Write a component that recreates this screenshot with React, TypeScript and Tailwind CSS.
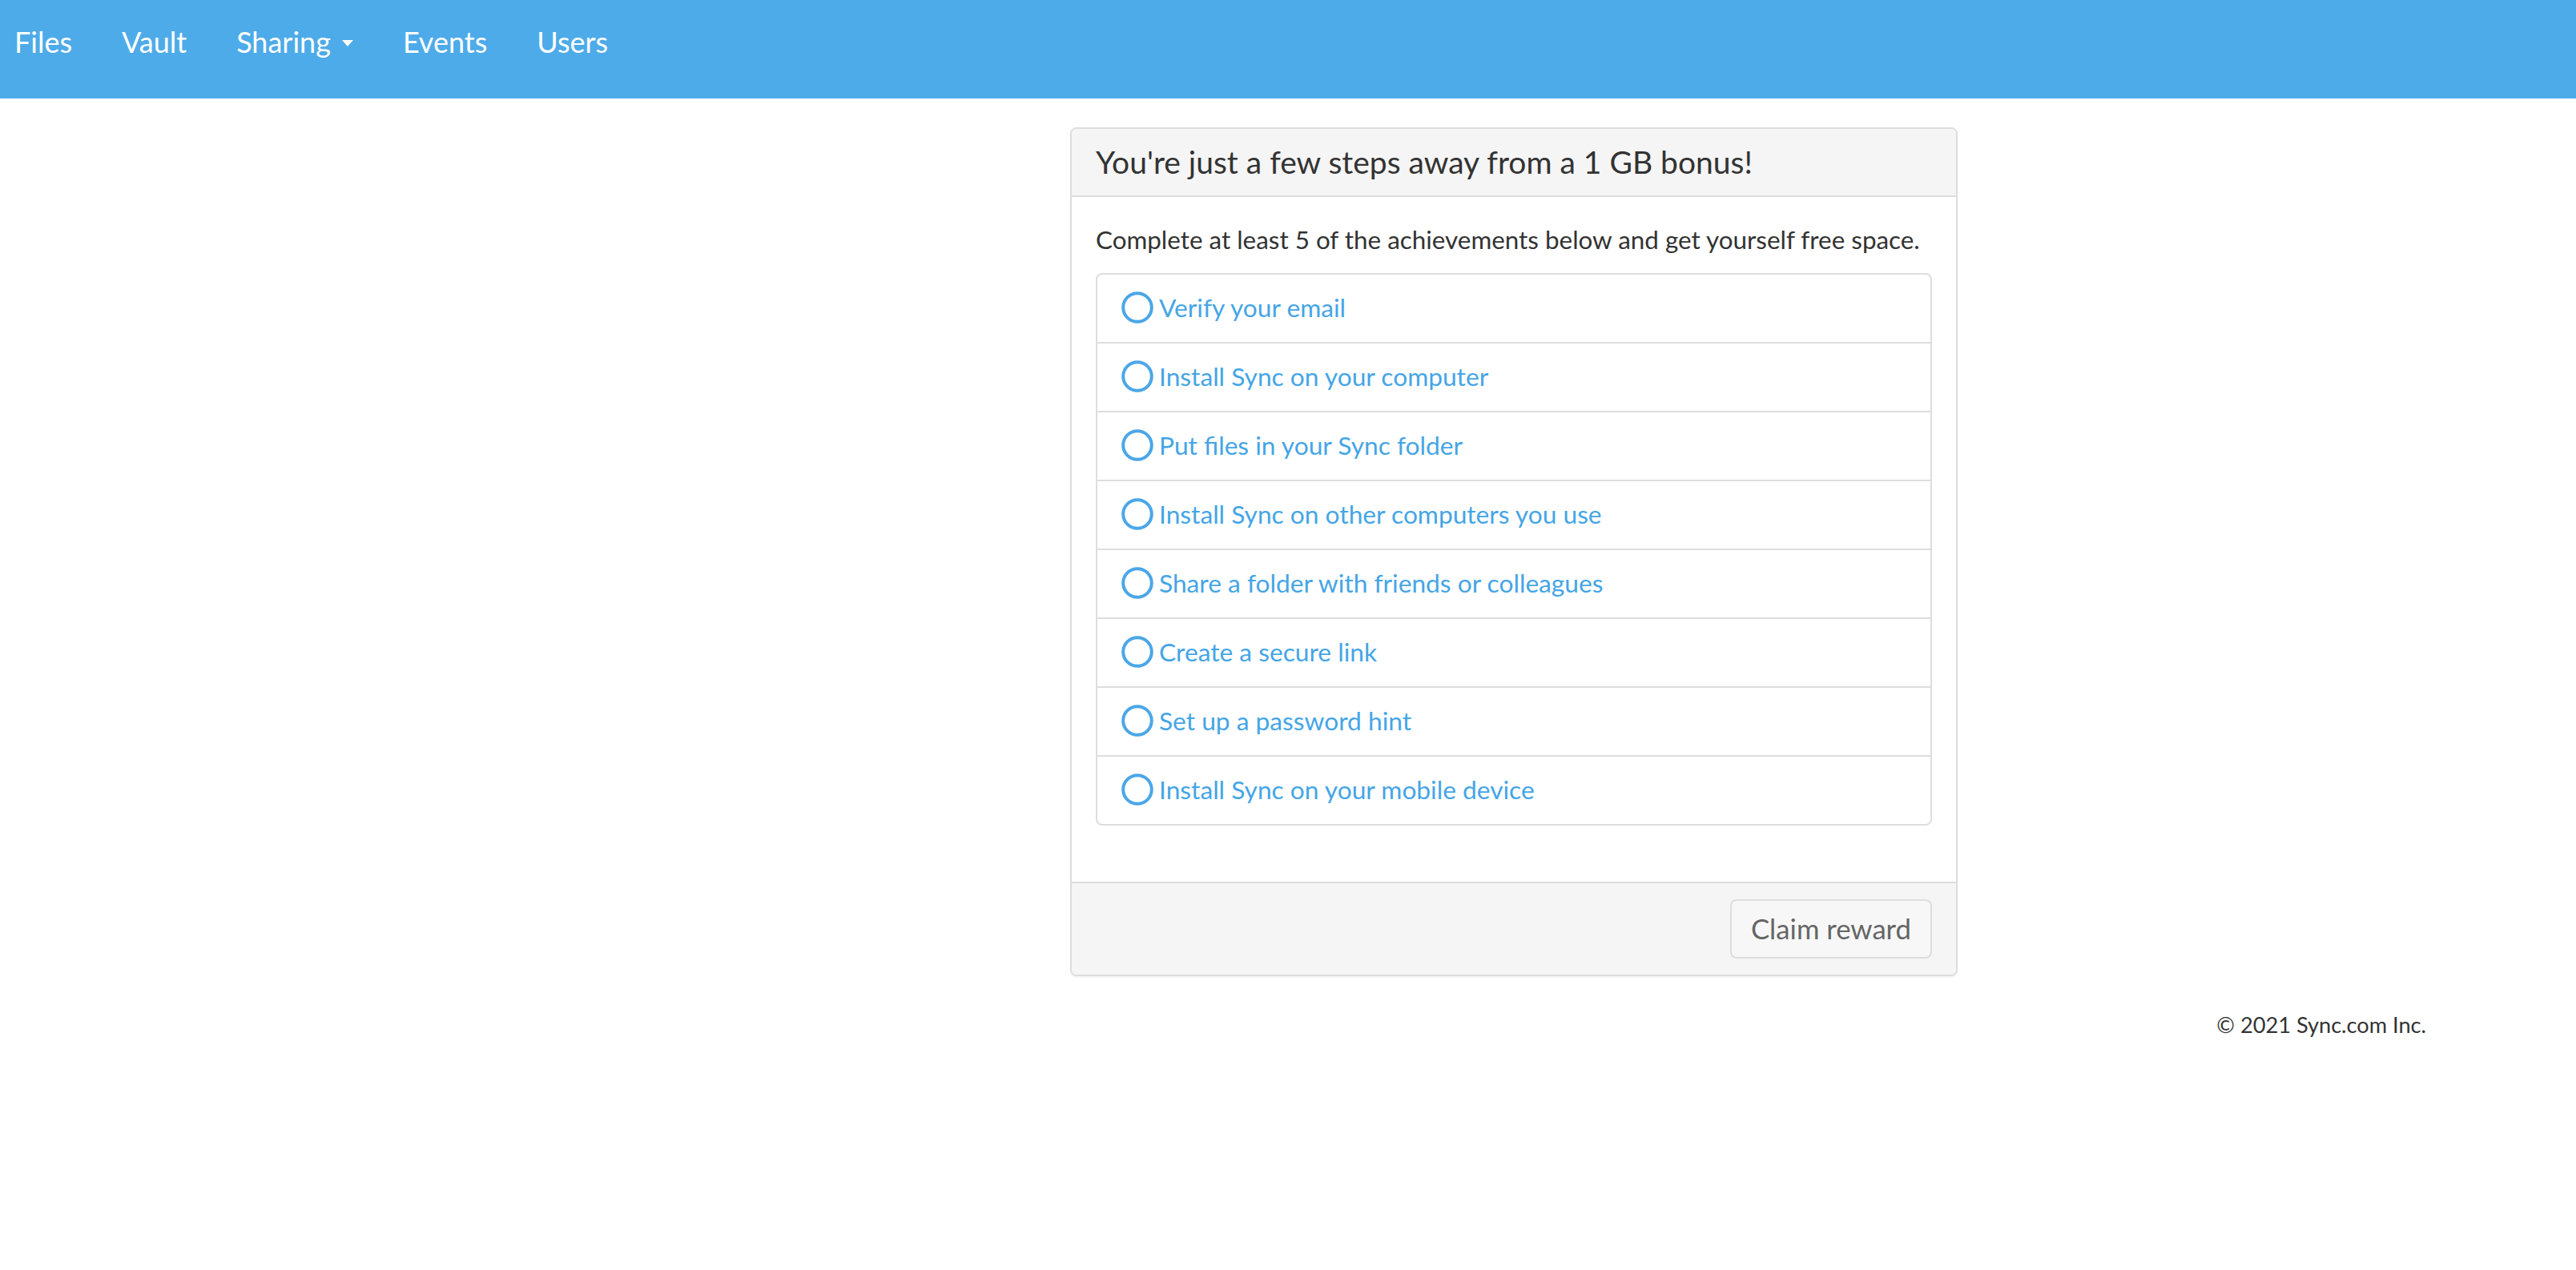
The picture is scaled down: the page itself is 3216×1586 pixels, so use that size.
import React from 'react';

const achievements = [
  'Verify your email',
  'Install Sync on your computer',
  'Put files in your Sync folder',
  'Install Sync on other computers you use',
  'Share a folder with friends or colleagues',
  'Create a secure link',
  'Set up a password hint',
  'Install Sync on your mobile device',
];

function NavBar() {
  return (
    <nav className="h-[123px] bg-[#4eabe9]">
      <ul className="flex gap-[62px] pl-[18px] pt-[32px] text-[36px] leading-[40px] text-white">
        <li>Files</li>
        <li>Vault</li>
        <li className="flex items-center">
          Sharing
          <span className="ml-[14px] mt-[4px] h-0 w-0 border-x-[7px] border-t-[8px] border-x-transparent border-t-white" />
        </li>
        <li>Events</li>
        <li>Users</li>
      </ul>
    </nav>
  );
}

function CircleIcon() {
  return (
    <svg width="40" height="40" viewBox="0 0 40 40" className="shrink-0">
      <circle cx="20" cy="20" r="17.8" fill="none" stroke="#4aa7e8" strokeWidth="4" />
    </svg>
  );
}

function AchievementPanel() {
  return (
    <div className="ml-[1336px] mt-[36px] w-[1108px] rounded-[8px] border-2 border-[#dddddd] bg-white shadow-[0_2px_2px_rgba(0,0,0,0.05)]">
      <div className="rounded-t-[6px] border-b-2 border-[#dddddd] bg-[#f5f5f5] px-[30px] py-[20px]">
        <h3 className="text-[39px] leading-[43px] text-[#333333]">
          You're just a few steps away from a 1 GB bonus!
        </h3>
      </div>

      <div className="px-[30px] pt-[32px] pb-[70px]">
        <p className="mb-[20px] text-[31.4px] leading-[43px] text-[#333333]">
          Complete at least 5 of the achievements below and get yourself free space.
        </p>
        <ul>
          {achievements.map((label, i) => (
            <li
              key={label}
              className={`flex items-center gap-[7px] border-2 border-[#dddddd] px-[30px] pt-[19px] pb-[21px] text-[31.7px] leading-[44px] text-[#45a5e6] ${
                i === 0 ? 'rounded-t-[8px]' : '-mt-[2px]'
              } ${i === achievements.length - 1 ? 'rounded-b-[8px]' : ''}`}
            >
              <CircleIcon />
              <span>{label}</span>
            </li>
          ))}
        </ul>
      </div>

      <div className="flex justify-end rounded-b-[6px] border-t-2 border-[#dddddd] bg-[#f5f5f5] px-[30px] py-[20px]">
        <button className="flex h-[74px] items-center rounded-[8px] border-2 border-[#dddddd] bg-[#f7f7f7] px-[24px] text-[34.7px] text-[#666666]">
          Claim reward
        </button>
      </div>
    </div>
  );
}

export default function App() {
  return (
    <div className="min-h-[1586px] bg-white font-['Lato',sans-serif]">
      <NavBar />
      <AchievementPanel />
      <footer className="mt-[41px] pr-[187px] text-right text-[27.2px] leading-[40px] text-[#333333]">
        © 2021 Sync.com Inc.
      </footer>
    </div>
  );
}
